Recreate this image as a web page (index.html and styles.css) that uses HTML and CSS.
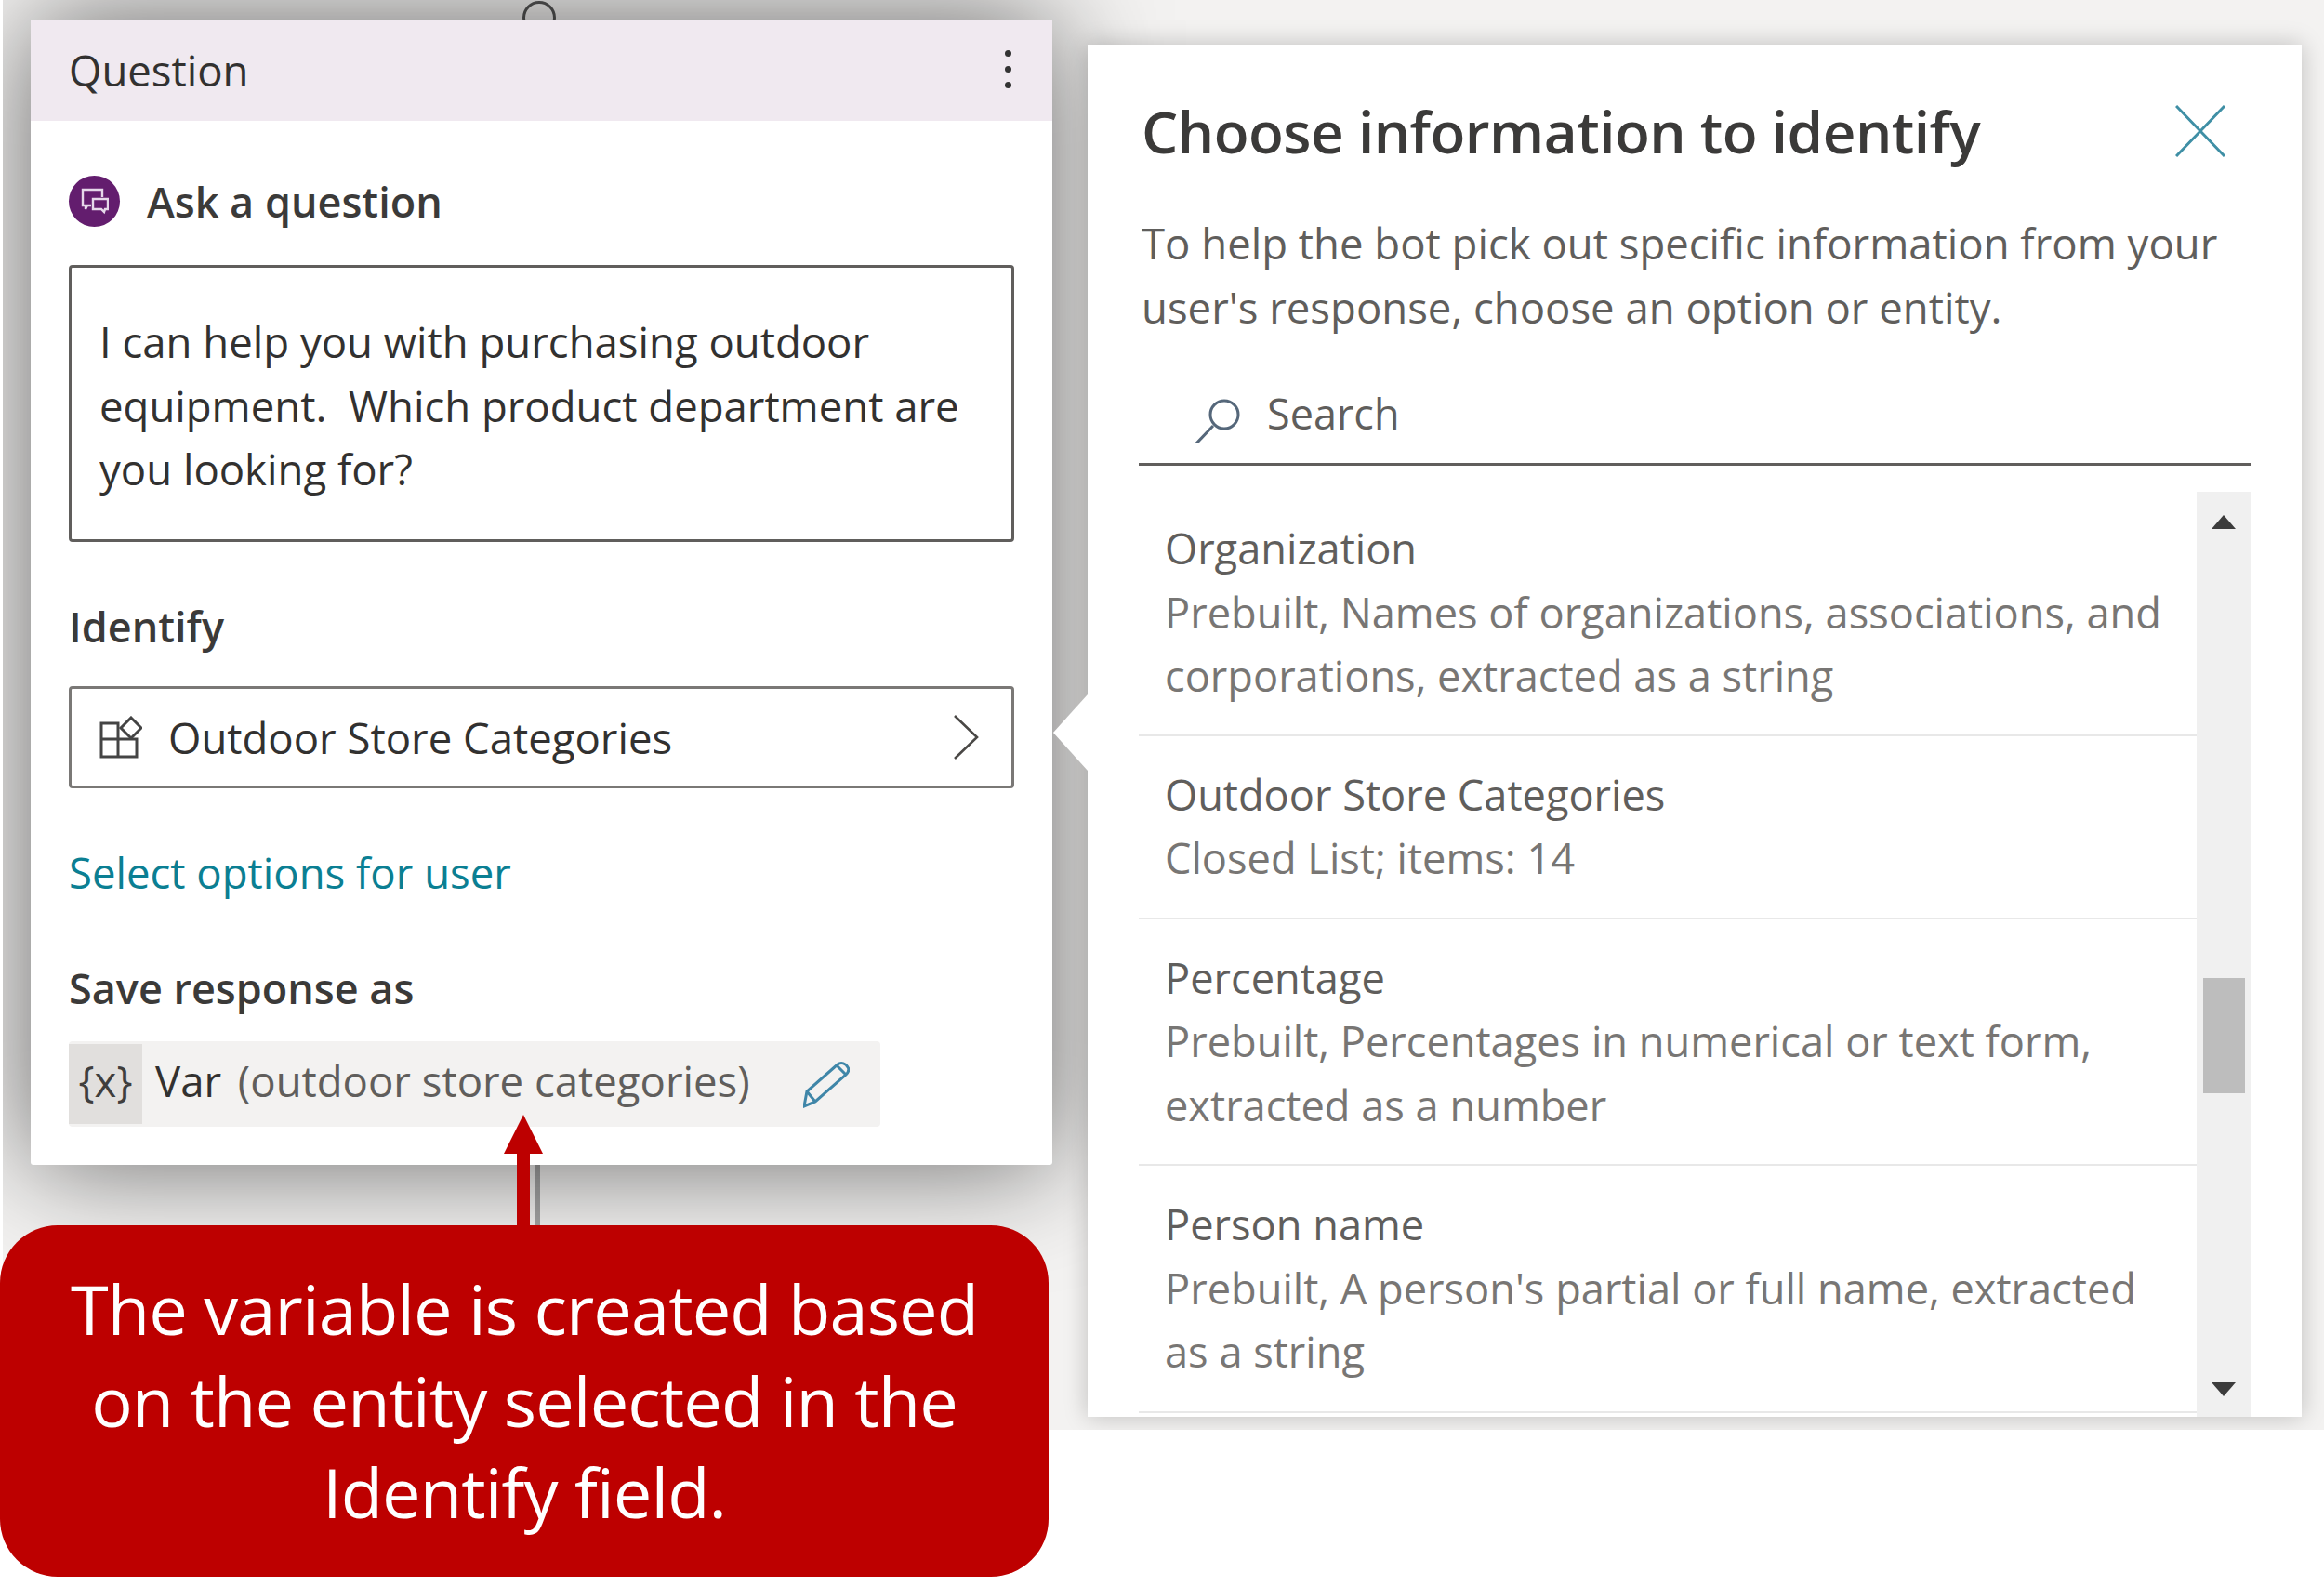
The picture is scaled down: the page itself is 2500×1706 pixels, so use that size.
FILE: index.html
```html
<!DOCTYPE html>
<html lang="en">
<head>
    <meta charset="UTF-8">
    <title>Choose information to identify</title>
    <link rel="stylesheet" href="styles.css">
</head>
<body>
    <div class="stage">
        <div class="node-dot"></div>
        <div class="node-line"></div>

        <div class="card">
            <div class="card-head">
                <span>Question</span>
                <div class="dots"><i></i><i></i><i></i></div>
            </div>
            <div class="card-body">
                <div class="ask">
                    <span class="ask-icon">
                        <svg width="30" height="30" viewBox="0 0 30 30" fill="none" stroke="#e6d8ea" stroke-width="2.4">
                            <path d="M11 20H7l-2 4v-4H2V3h21v8"/>
                            <path d="M13 13h16v11h-3l-1 3-3-3h-9z"/>
                        </svg>
                    </span>
                    <span>Ask a question</span>
                </div>
                <div class="message">I can help you with purchasing outdoor equipment.&nbsp; Which product department are you looking for?</div>
                <div class="label identify">Identify</div>
                <div class="select">
                    <svg width="46" height="46" viewBox="0 0 46 46" fill="none" stroke="#444" stroke-width="3">
                        <path d="M2 8h18v17H2zM2 25h38v19H2zM20 25v19"/>
                        <path d="M34 2l11 11-11 11-11-11z"/>
                    </svg>
                    <span class="select-text">Outdoor Store Categories</span>
                    <svg width="30" height="50" viewBox="0 0 30 50" fill="none" stroke="#4a4846" stroke-width="2.6">
                        <path d="M3 2l24 23L3 48"/>
                    </svg>
                </div>
                <div class="link">Select options for user</div>
                <div class="label save">Save response as</div>
                <div class="var">
                    <span class="var-tag">{x}</span>
                    <span class="var-name"><b>Var</b> (outdoor store categories)</span>
                    <svg width="50" height="52" viewBox="0 0 50 52" fill="none" stroke="#3f86a8" stroke-width="3">
                        <path d="M1 50L4 34 37 5c4-3 9-1 11 3 2 3 0 6-2 8L13 45z"/>
                        <path d="M4 34l9 11M36 6l10 10"/>
                    </svg>
                </div>
            </div>
        </div>

        <div class="panel">
            <div class="beak"></div>
            <div class="panel-head">
                <h1>Choose information to identify</h1>
                <svg width="54" height="56" viewBox="0 0 54 56" stroke="#3f8fa5" stroke-width="3">
                    <path d="M1 1l52 54M53 1L1 55"/>
                </svg>
            </div>
            <p class="intro">To help the bot pick out specific information from your user's response, choose an option or entity.</p>
            <div class="search">
                <svg width="50" height="66" viewBox="0 0 50 66" fill="none" stroke="#55677a" stroke-width="3">
                    <circle cx="31" cy="35" r="15"/>
                    <path d="M19 47L1 66"/>
                </svg>
                <span>Search</span>
            </div>
            <div class="list-wrap">
                <div class="list">
                    <div class="item first">
                        <div class="item-name">Organization</div>
                        <div>Prebuilt, Names of organizations, associations, and corporations, extracted as a string</div>
                    </div>
                    <div class="item">
                        <div class="item-name">Outdoor Store Categories</div>
                        <div>Closed List; items: 14</div>
                    </div>
                    <div class="item">
                        <div class="item-name">Percentage</div>
                        <div>Prebuilt, Percentages in numerical or text form, extracted as a number</div>
                    </div>
                    <div class="item">
                        <div class="item-name">Person name</div>
                        <div>Prebuilt, A person's partial or full name, extracted as a string</div>
                    </div>
                </div>
                <div class="scroll">
                    <div class="arrow-up"></div>
                    <div class="thumb"></div>
                    <div class="arrow-down"></div>
                </div>
            </div>
        </div>
    </div>

    <div class="pointer">
        <div class="pointer-head"></div>
        <div class="pointer-shaft"></div>
    </div>
    <div class="callout">The variable is created based<br>on the entity selected in the<br>Identify field.</div>
</body>
</html>
```

FILE: styles.css
```css
body {
    margin: 0;
    height: 1706px;
    background-color: white;
    font-family: "Open Sans", "Noto Sans", sans-serif;
    position: relative;
    overflow: hidden;
}

.stage {
    display: flex;
    align-items: flex-start;
    position: relative;
    margin-left: 3px;
    height: 1538px;
    overflow: hidden;
    background-color: #f3f2f1;
}

/* flow node sitting behind the question card */
.node-dot {
    position: absolute;
    left: 559px;
    top: 1px;
    width: 30px;
    height: 30px;
    border: 3px solid #555;
    border-radius: 50%;
}

.node-line {
    position: absolute;
    left: 572px;
    top: 1250px;
    width: 6px;
    height: 80px;
    background-color: #a3a3a3;
}

.card {
    position: relative;
    margin: 21px 0 0 30px;
    width: 1099px;
    background-color: white;
    border-radius: 3px;
    box-shadow: 0 0 120px rgba(0, 0, 0, 0.58);
    color: #323130;
}

.card-head {
    display: flex;
    justify-content: space-between;
    align-items: center;
    box-sizing: border-box;
    height: 109px;
    padding: 0 44px 2px 41px;
    background-color: #f0e9f0;
    font-size: 45.5px;
}

.dots {
    display: flex;
    flex-direction: column;
    gap: 10px;
}

.dots i {
    width: 7px;
    height: 7px;
    border-radius: 50%;
    background-color: #333;
}

.card-body {
    padding: 58px 41px 41px 41px;
}

.ask {
    display: flex;
    align-items: center;
    gap: 29px;
    height: 56px;
    font-size: 45px;
    font-weight: 600;
    color: #3b3a39;
}

.ask-icon {
    display: flex;
    align-items: center;
    justify-content: center;
    width: 55px;
    height: 55px;
    border-radius: 50%;
    background-color: #631d6e;
}

.message {
    box-sizing: border-box;
    height: 298px;
    margin-top: 41px;
    padding: 45px 20px 0 30px;
    border: 3px solid #605e5c;
    border-radius: 4px;
    font-size: 45.5px;
    line-height: 68.5px;
}

.label {
    font-size: 45px;
    font-weight: 600;
    line-height: 68px;
    color: #3b3a39;
}

.identify {
    margin-top: 57px;
}

.select {
    display: flex;
    align-items: center;
    box-sizing: border-box;
    height: 110px;
    margin-top: 30px;
    padding: 0 34px 0 30px;
    border: 3px solid #7a7876;
    border-radius: 4px;
    font-size: 45.5px;
}

.select-text {
    flex: 1;
    margin-left: 28px;
}

.link {
    margin-top: 56px;
    font-size: 45.5px;
    line-height: 68px;
    color: #0b7f93;
}

.save {
    margin-top: 57px;
}

.var {
    display: flex;
    align-items: center;
    box-sizing: border-box;
    width: 873px;
    height: 92px;
    margin-top: 23px;
    border-radius: 4px;
    background-color: #f3f2f1;
    font-size: 45.5px;
    color: #605e5c;
}

.var-tag {
    display: flex;
    align-items: center;
    justify-content: center;
    width: 79px;
    height: 86px;
    padding-bottom: 9px;
    box-sizing: border-box;
    background-color: #e1dfdd;
    color: #3f3e3d;
}

.var-name {
    width: 697px;
    margin-left: 14px;
    padding-bottom: 8px;
    white-space: nowrap;
}

.var-name b {
    margin-right: 6px;
    font-weight: 400;
    color: #323130;
}

.panel {
    position: relative;
    box-sizing: border-box;
    width: 1306px;
    height: 1476px;
    margin: 48px 0 0 38px;
    padding: 0 55px;
    background-color: white;
    box-shadow: 0 0 24px rgba(0, 0, 0, 0.22);
    color: #605e5c;
}

.beak {
    position: absolute;
    left: -37px;
    top: 699px;
    width: 0;
    height: 0;
    border-top: 41px solid transparent;
    border-bottom: 41px solid transparent;
    border-right: 37px solid white;
}

.panel-head {
    display: flex;
    justify-content: space-between;
    align-items: center;
    margin-left: 3px;
    padding-top: 48px;
    padding-right: 27px;
}

h1 {
    margin: 0;
    font-size: 62px;
    font-weight: 600;
    line-height: 90px;
    letter-spacing: -0.5px;
    color: #3b3a39;
}

.intro {
    margin: 41px 0 0 3px;
    font-size: 45.5px;
    line-height: 68.5px;
}

.search {
    display: flex;
    align-items: center;
    gap: 27px;
    box-sizing: border-box;
    height: 111px;
    margin-top: 26px;
    padding: 0 0 0 61px;
    border-bottom: 3px solid #605e5c;
    font-size: 45px;
}

.list-wrap {
    display: flex;
    height: 995px;
    margin-top: 28px;
    overflow: hidden;
}

.list {
    flex: 1;
    font-size: 45.2px;
    line-height: 68.5px;
    color: #787674;
}

.item {
    padding: 29px 30px 29px 28px;
    border-bottom: 2px solid #e8e8e8;
}

.item.first {
    padding-top: 27px;
    padding-bottom: 28px;
}

.item-name {
    color: #605e5c;
}

.scroll {
    display: flex;
    flex-direction: column;
    align-items: center;
    width: 58px;
    box-sizing: border-box;
    padding-top: 25px;
    background-color: #f0f0f0;
}

.arrow-up,
.arrow-down {
    width: 0;
    height: 0;
    border-left: 13px solid transparent;
    border-right: 13px solid transparent;
}

.arrow-up {
    border-bottom: 15px solid #3c3c3c;
}

.arrow-down {
    margin-top: 311px;
    border-top: 15px solid #3c3c3c;
}

.thumb {
    width: 45px;
    height: 124px;
    margin-top: 483px;
    background-color: #bdbdbd;
}

/* annotation laid over the screenshot */
.pointer {
    position: absolute;
    left: 542px;
    top: 1199px;
    width: 42px;
    display: flex;
    flex-direction: column;
    align-items: center;
}

.pointer-head {
    width: 0;
    height: 0;
    border-left: 21px solid transparent;
    border-right: 21px solid transparent;
    border-bottom: 42px solid #bd0000;
}

.pointer-shaft {
    width: 14px;
    height: 80px;
    background-color: #bd0000;
}

.callout {
    position: absolute;
    left: 0;
    top: 1318px;
    display: flex;
    align-items: center;
    justify-content: center;
    width: 1128px;
    height: 378px;
    border-radius: 62px;
    background-color: #bd0000;
    color: white;
    font-size: 74px;
    line-height: 98.5px;
    letter-spacing: -0.9px;
    text-align: center;
}
```
